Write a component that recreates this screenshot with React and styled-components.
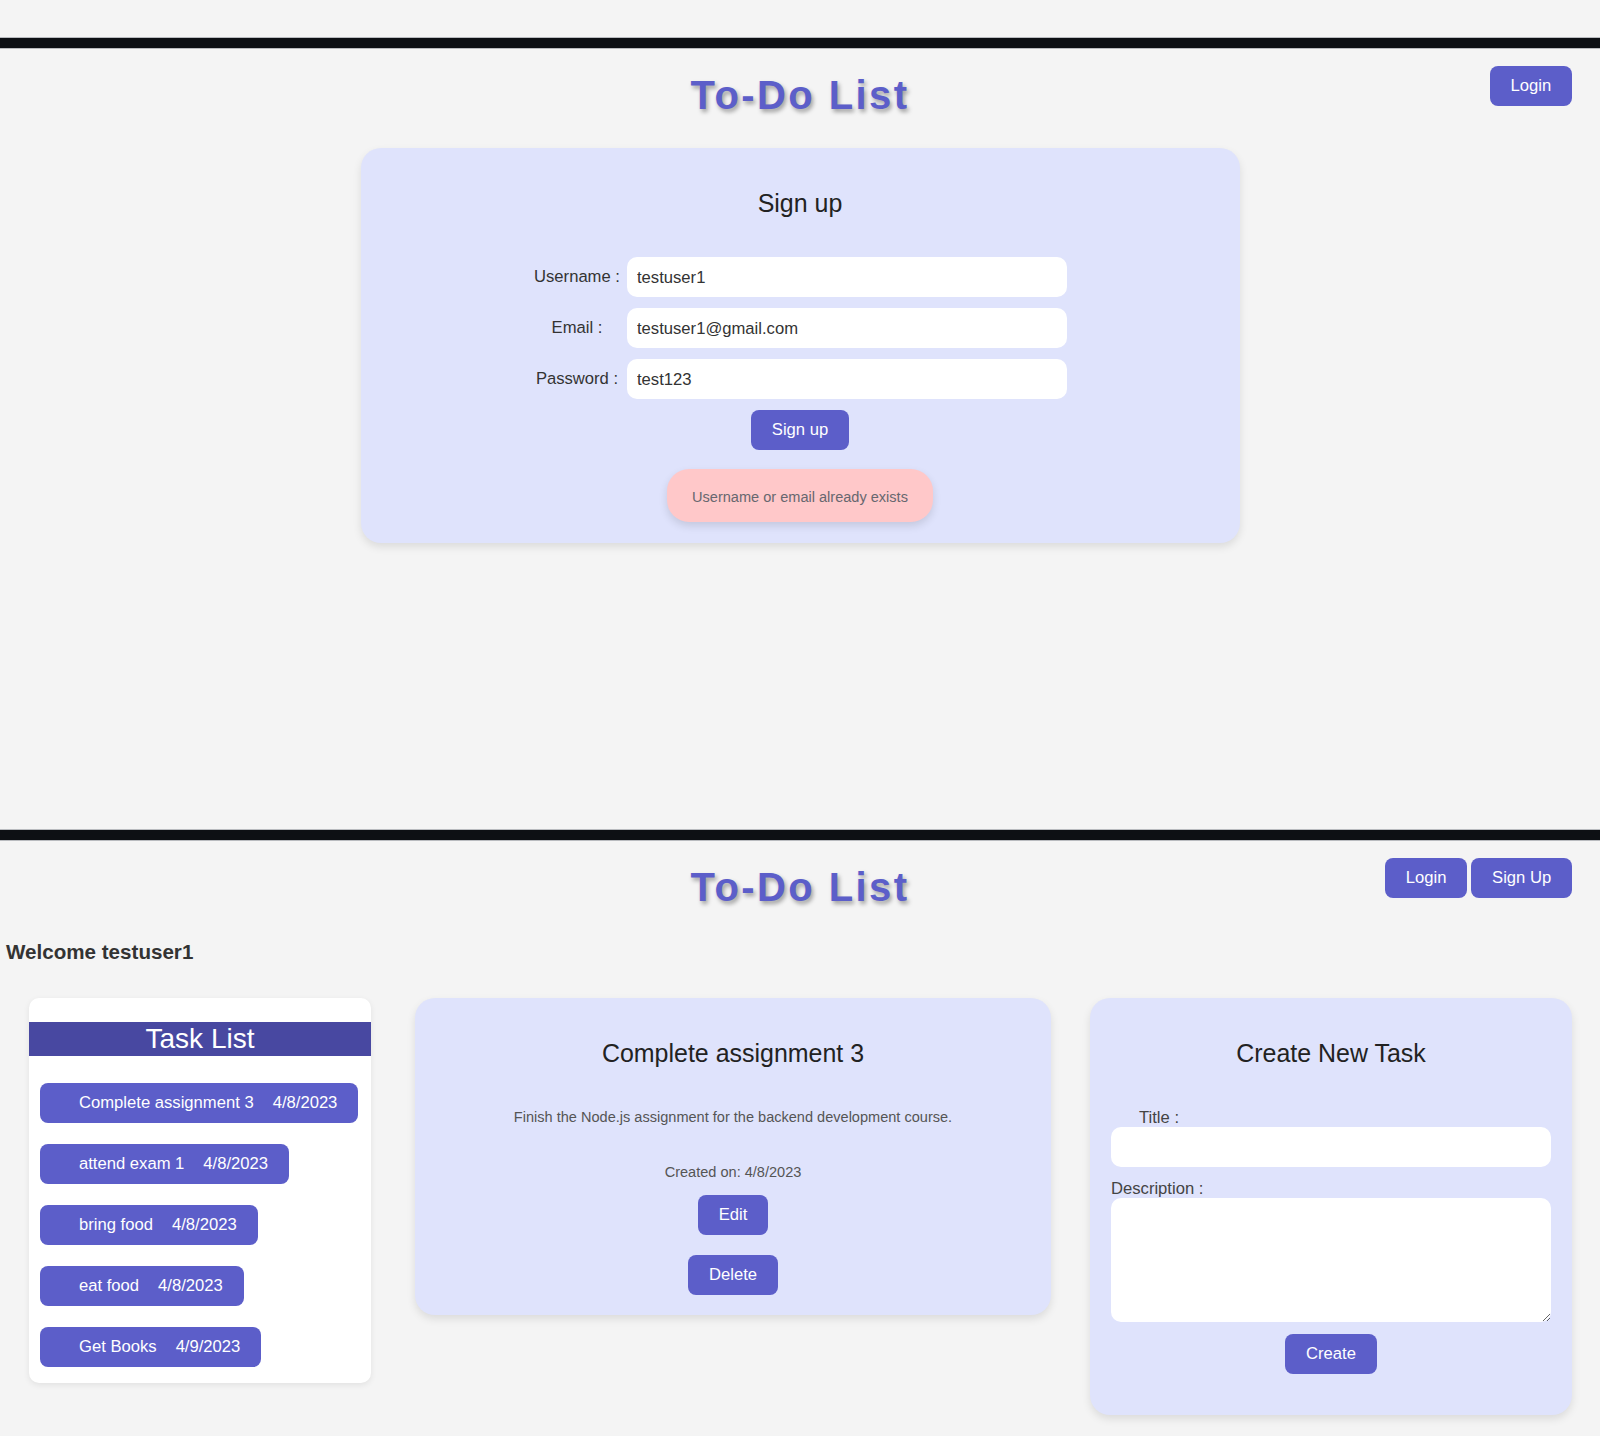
import React from 'react';
import styled, { createGlobalStyle } from 'styled-components';

const GlobalStyle = createGlobalStyle`
  html, body {
    margin: 0;
    padding: 0;
    background: #f4f4f4;
    font-family: "Liberation Sans", Arial, sans-serif;
    color: #333;
  }
`;

const accent = '#5c5ec9';

const Page = styled.div`
  display: flex;
  flex-direction: column;
`;

const Screen = styled.section`
  display: flex;
  flex-direction: column;
  padding-top: ${p => p.$top}px;
  min-height: ${p => p.$height}px;
  box-sizing: border-box;
`;

const WindowBar = styled.div`
  height: 10px;
  background: #0d1014;
  border-top: 1px solid #b9bbbf;
  border-bottom: 1px solid #b9bbbf;
`;

const Header = styled.header`
  display: grid;
  grid-template-columns: 1fr auto 1fr;
  padding: 17px 28px 0 28px;
`;

const Title = styled.h1`
  grid-column: 2;
  margin: 7px 0 0 0;
  font-size: 40px;
  line-height: 44px;
  font-weight: 700;
  letter-spacing: 2.4px;
  color: ${accent};
  text-shadow: 2px 3px 4px rgba(0, 0, 0, 0.35);
`;

const Nav = styled.nav`
  grid-column: 3;
  justify-self: end;
  align-self: start;
  display: flex;
  gap: 4px;
`;

const Button = styled.button`
  height: 40px;
  padding: 0 20.8px;
  border: none;
  border-radius: 8px;
  background: ${accent};
  color: #fff;
  font-family: "Liberation Sans", Arial, sans-serif;
  font-size: 16.64px;
  cursor: pointer;
  margin-top: ${p => p.$mt || 0}px;
`;

const SignUpCard = styled.div`
  align-self: center;
  width: 879px;
  margin-top: 31px;
  padding: 21px;
  box-sizing: border-box;
  background: #dfe3fc;
  border-radius: 20px;
  box-shadow: 0 4px 8px rgba(0, 0, 0, 0.1);
  display: flex;
  flex-direction: column;
  align-items: center;
`;

const CardHeading = styled.h2`
  margin: 19px 0 0 0;
  font-size: 24.96px;
  line-height: 30px;
  font-weight: 400;
  color: #222;
  text-align: center;
`;

const FormGrid = styled.div`
  display: grid;
  grid-template-columns: 100px 440px;
  row-gap: 11px;
  align-items: center;
  margin: 39px 6px 0 0;
`;

const InlineLabel = styled.label`
  text-align: center;
  font-size: 16.64px;
  color: #333;
`;

const TextInput = styled.input`
  height: 40px;
  width: 100%;
  box-sizing: border-box;
  border: none;
  border-radius: 10px;
  background: #fff;
  padding: 2px 10px 0 10px;
  font-family: "Liberation Sans", Arial, sans-serif;
  font-size: 16.64px;
  color: #333;
  outline: none;
`;

const ErrorBox = styled.div`
  margin-top: 19px;
  padding: 20px 25.5px 16px 25.5px;
  background: #ffc8c9;
  border-radius: 22px;
  box-shadow: 0 4px 8px rgba(0, 0, 0, 0.12);
  font-size: 14.56px;
  line-height: 17px;
  color: #67676f;
`;

const Welcome = styled.h3`
  margin: 31px 0 0 6px;
  font-size: 20.6px;
  line-height: 24px;
  font-weight: 700;
  color: #333;
`;

const Board = styled.div`
  display: flex;
  align-items: flex-start;
  padding-left: 29px;
  margin-top: 34px;
`;

const ListCard = styled.div`
  width: 342px;
  box-sizing: border-box;
  padding: 24px 0 16px 0;
  background: #fff;
  border-radius: 10px;
  box-shadow: 0 2px 6px rgba(0, 0, 0, 0.08);
`;

const ListHeader = styled.div`
  height: 34px;
  line-height: 34px;
  background: #4848a1;
  color: #fff;
  text-align: center;
  font-size: 28px;
`;

const TaskItems = styled.div`
  display: flex;
  flex-direction: column;
  align-items: flex-start;
  gap: 21px;
  padding: 27px 11px 0 11px;
`;

const TaskItem = styled.button`
  display: flex;
  gap: 19px;
  align-items: center;
  height: 40px;
  padding: 0 21px 0 39px;
  border: none;
  border-radius: 8px;
  background: ${accent};
  color: #fff;
  font-family: "Liberation Sans", Arial, sans-serif;
  font-size: 16.64px;
  cursor: pointer;
`;

const Panel = styled.div`
  width: ${p => p.$w}px;
  margin-left: ${p => p.$ml}px;
  box-sizing: border-box;
  padding: 21px 21px ${p => p.$pb}px 21px;
  background: #dfe3fc;
  border-radius: 20px;
  box-shadow: 0 4px 8px rgba(0, 0, 0, 0.1);
  display: flex;
  flex-direction: column;
  align-items: center;
`;

const Note = styled.p`
  margin: ${p => p.$mt}px 0 0 0;
  font-size: 14.56px;
  line-height: 17px;
  color: #555;
  text-align: center;
`;

const Field = styled.div`
  align-self: stretch;
  display: flex;
  flex-direction: column;
  margin-top: ${p => p.$mt}px;
`;

const FieldLabel = styled.label`
  font-size: 16.64px;
  line-height: 19px;
  color: #444;
  padding-left: ${p => p.$indent || 0}px;
`;

const TextArea = styled.textarea`
  height: 124px;
  box-sizing: border-box;
  border: none;
  border-radius: 10px;
  background: #fff;
  padding: 8px 10px;
  font-family: "Liberation Sans", Arial, sans-serif;
  font-size: 16.64px;
  outline: none;
`;

const tasks = [
  { title: 'Complete assignment 3', date: '4/8/2023' },
  { title: 'attend exam 1', date: '4/8/2023' },
  { title: 'bring food', date: '4/8/2023' },
  { title: 'eat food', date: '4/8/2023' },
  { title: 'Get Books', date: '4/9/2023' },
];

export default function App() {
  return (
    <Page>
      <GlobalStyle />
      <Screen $top={37} $height={829}>
        <WindowBar />
        <Header>
          <Title>To-Do List</Title>
          <Nav>
            <Button>Login</Button>
          </Nav>
        </Header>
        <SignUpCard>
          <CardHeading>Sign up</CardHeading>
          <FormGrid>
            <InlineLabel>Username :</InlineLabel>
            <TextInput defaultValue="testuser1" />
            <InlineLabel>Email :</InlineLabel>
            <TextInput defaultValue="testuser1@gmail.com" />
            <InlineLabel>Password :</InlineLabel>
            <TextInput defaultValue="test123" />
          </FormGrid>
          <Button $mt={11}>Sign up</Button>
          <ErrorBox>Username or email already exists</ErrorBox>
        </SignUpCard>
      </Screen>

      <Screen $top={0} $height={607}>
        <WindowBar />
        <Header>
          <Title>To-Do List</Title>
          <Nav>
            <Button>Login</Button>
            <Button>Sign Up</Button>
          </Nav>
        </Header>
        <Welcome>Welcome testuser1</Welcome>
        <Board>
          <ListCard>
            <ListHeader>Task List</ListHeader>
            <TaskItems>
              {tasks.map(t => (
                <TaskItem key={t.title}>
                  <span>{t.title}</span>
                  <span>{t.date}</span>
                </TaskItem>
              ))}
            </TaskItems>
          </ListCard>

          <Panel $w={636} $ml={44} $pb={20}>
            <CardHeading>Complete assignment 3</CardHeading>
            <Note $mt={41}>Finish the Node.js assignment for the backend development course.</Note>
            <Note $mt={38}>Created on: 4/8/2023</Note>
            <Button $mt={14}>Edit</Button>
            <Button $mt={20}>Delete</Button>
          </Panel>

          <Panel $w={482} $ml={39} $pb={41}>
            <CardHeading>Create New Task</CardHeading>
            <Field $mt={40}>
              <FieldLabel $indent={28}>Title :</FieldLabel>
              <TextInput />
            </Field>
            <Field $mt={12}>
              <FieldLabel>Description :</FieldLabel>
              <TextArea />
            </Field>
            <Button $mt={12}>Create</Button>
          </Panel>
        </Board>
      </Screen>
    </Page>
  );
}
